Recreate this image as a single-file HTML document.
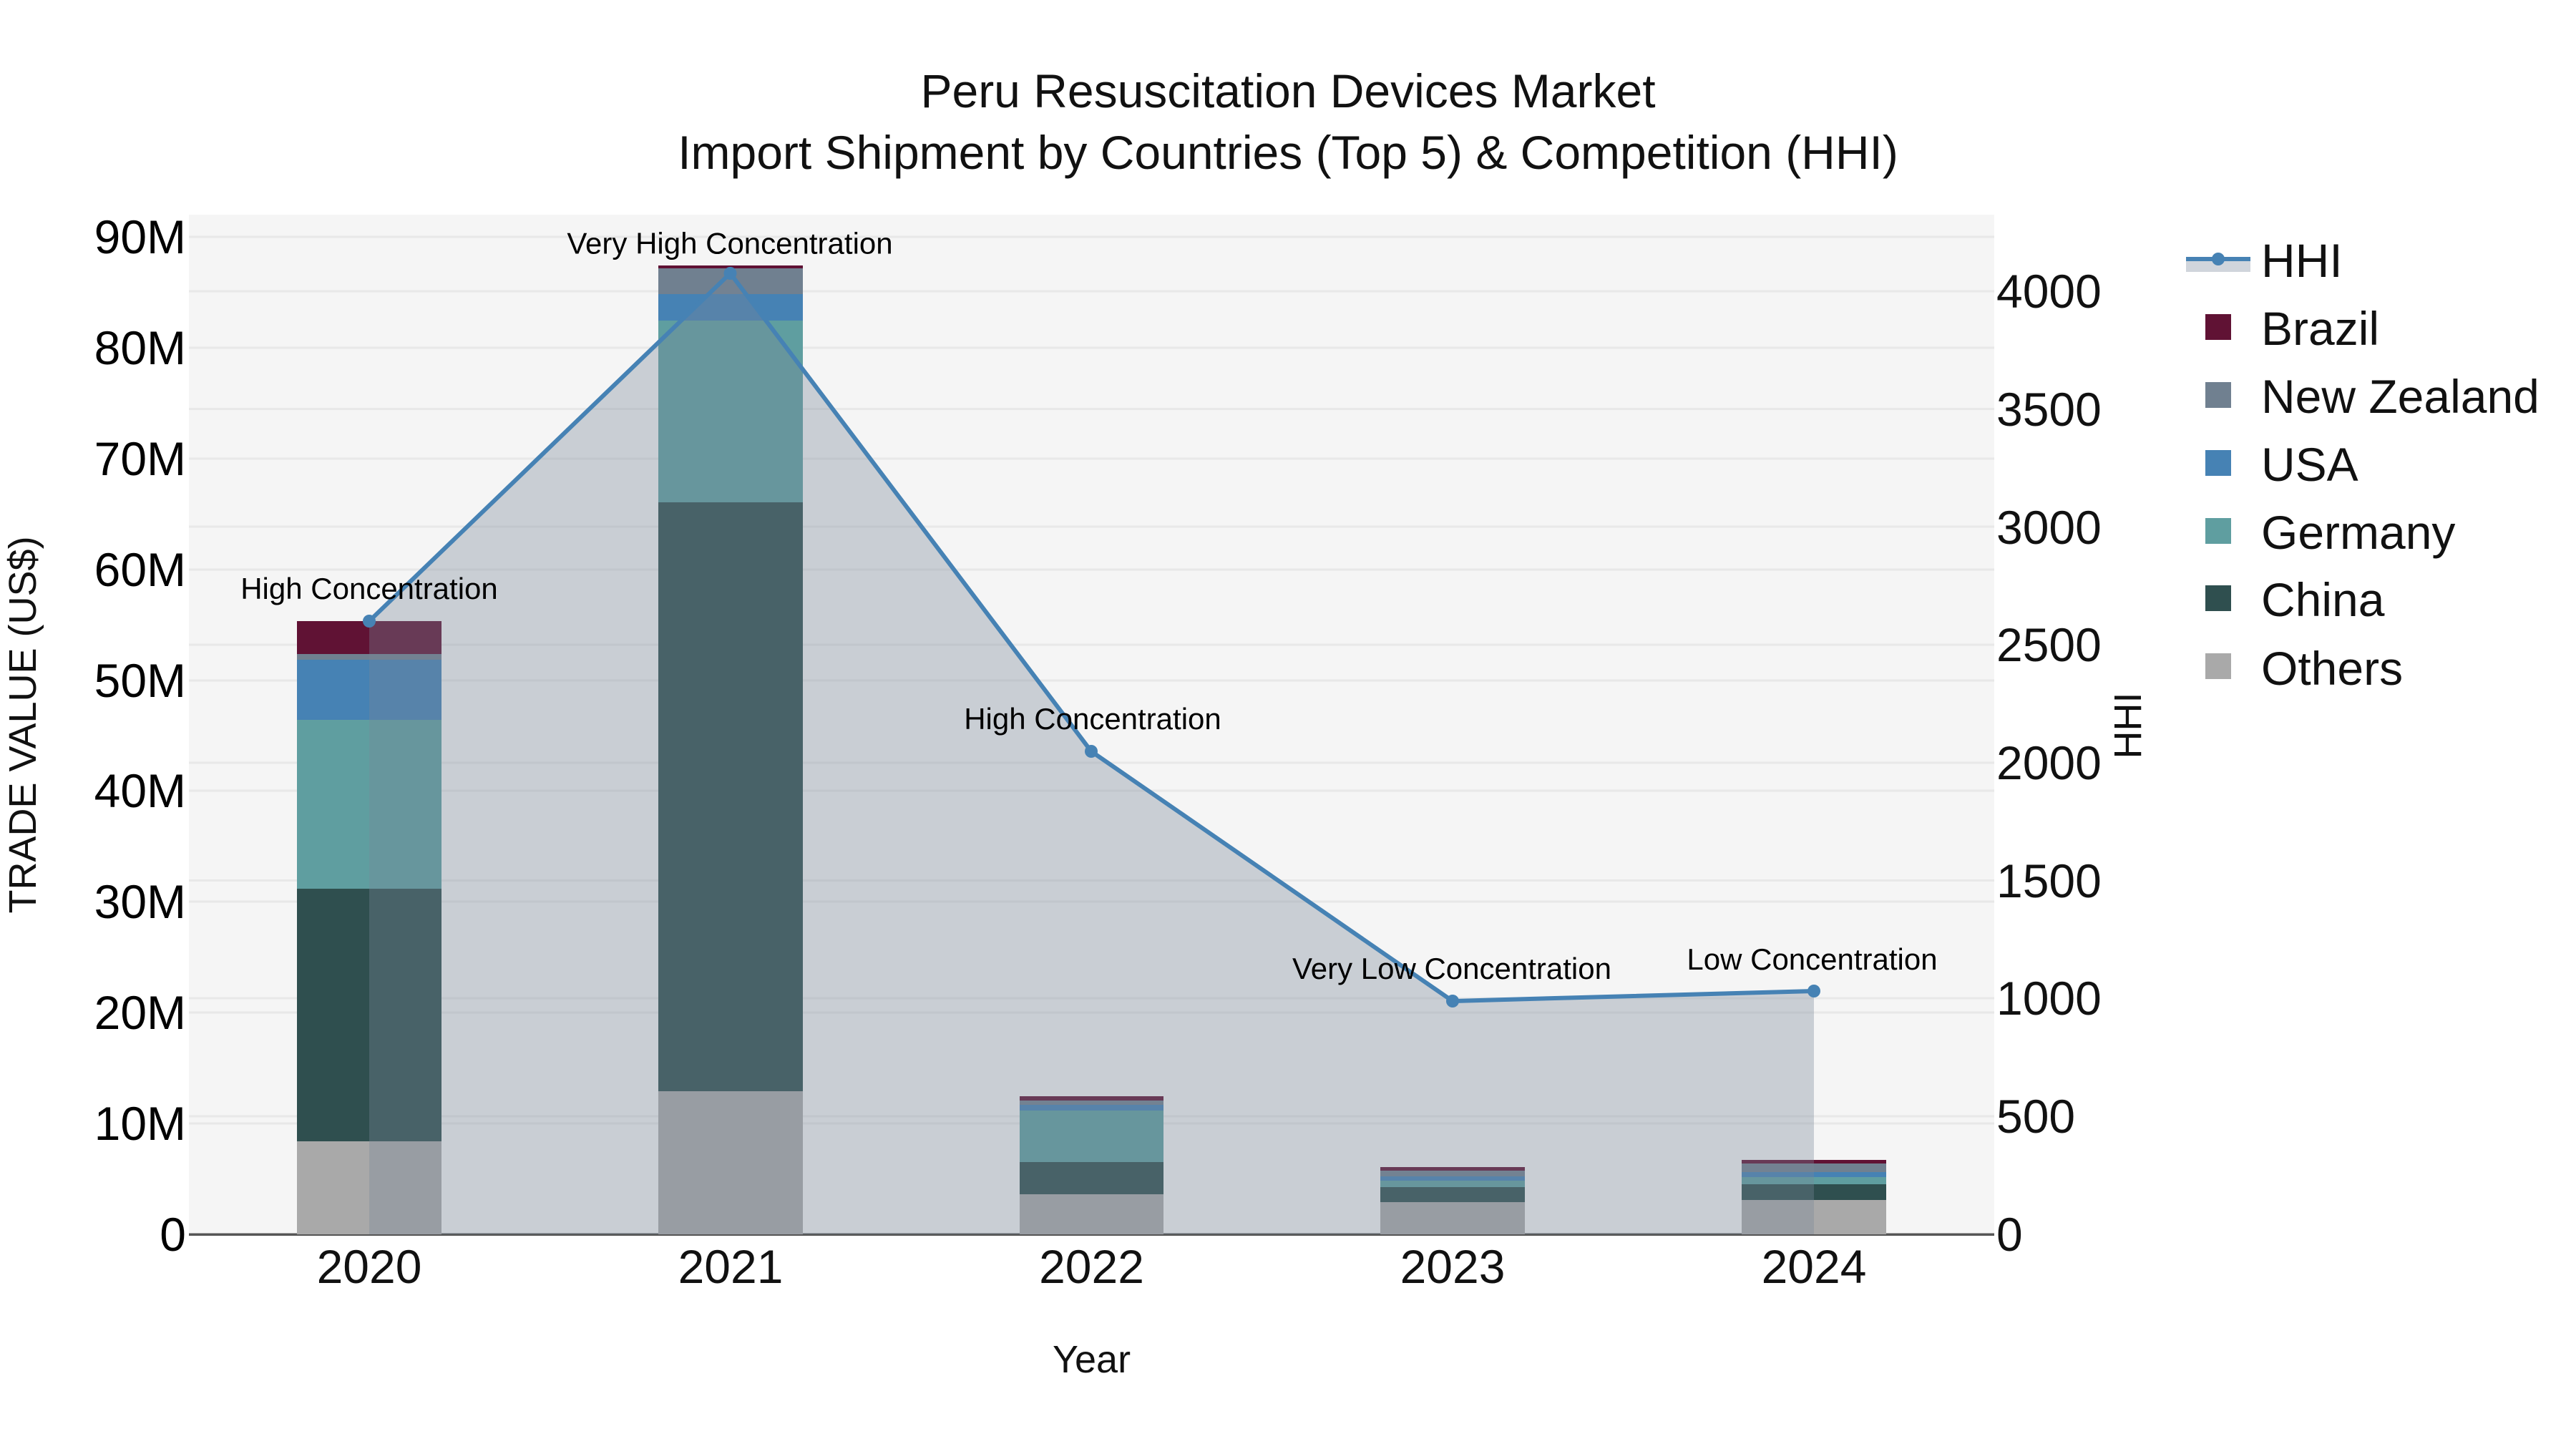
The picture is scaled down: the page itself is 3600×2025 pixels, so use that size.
<!DOCTYPE html>
<html>
<head>
<meta charset="utf-8">
<style>
html,body{margin:0;padding:0;background:#fff;width:3600px;height:2025px;overflow:hidden}
svg{display:block}
text{font-family:"Liberation Sans",Arial,sans-serif}
</style>
</head>
<body>
<svg xmlns="http://www.w3.org/2000/svg" width="3600" height="2025" viewBox="0 0 3600 2025">
<rect width="3600" height="2025" fill="#fff"/>
<rect x="264" y="300" width="2523" height="1425" fill="#f5f5f5"/>
<!-- grids -->
<g stroke="#e8e8e8" stroke-width="3" fill="none">
<path d="M264 331H2787M264 486H2787M264 641H2787M264 796H2787M264 951H2787M264 1105H2787M264 1260H2787M264 1415H2787M264 1570H2787"/>
<path d="M264 407H2787M264 571.500H2787M264 736H2787M264 901H2787M264 1066H2787M264 1230.500H2787M264 1395H2787M264 1560H2787"/>
</g>
<path d="M264 1725.300H2787" stroke="#555" stroke-width="3.500" fill="none"/>
<!-- bars -->
<g shape-rendering="crispEdges">
<!-- 2020 -->
<rect x="415" y="868" width="202" height="46" fill="#601234"/>
<rect x="415" y="914" width="202" height="8" fill="#708090"/>
<rect x="415" y="922" width="202" height="84" fill="#4682b4"/>
<rect x="415" y="1006" width="202" height="236" fill="#5f9ea0"/>
<rect x="415" y="1242" width="202" height="353" fill="#2f4f4f"/>
<rect x="415" y="1595" width="202" height="130" fill="#a9a9a9"/>
<!-- 2021 -->
<rect x="920" y="371" width="202" height="4" fill="#601234"/>
<rect x="920" y="375" width="202" height="36" fill="#708090"/>
<rect x="920" y="411" width="202" height="37" fill="#4682b4"/>
<rect x="920" y="448" width="202" height="254" fill="#5f9ea0"/>
<rect x="920" y="702" width="202" height="823" fill="#2f4f4f"/>
<rect x="920" y="1525" width="202" height="200" fill="#a9a9a9"/>
<!-- 2022 -->
<rect x="1425" y="1532" width="201" height="6" fill="#601234"/>
<rect x="1425" y="1538" width="201" height="6" fill="#708090"/>
<rect x="1425" y="1544" width="201" height="8" fill="#4682b4"/>
<rect x="1425" y="1552" width="201" height="72" fill="#5f9ea0"/>
<rect x="1425" y="1624" width="201" height="45" fill="#2f4f4f"/>
<rect x="1425" y="1669" width="201" height="56" fill="#a9a9a9"/>
<!-- 2023 -->
<rect x="1929" y="1631" width="202" height="5" fill="#601234"/>
<rect x="1929" y="1636" width="202" height="8" fill="#708090"/>
<rect x="1929" y="1644" width="202" height="6" fill="#4682b4"/>
<rect x="1929" y="1650" width="202" height="9" fill="#5f9ea0"/>
<rect x="1929" y="1659" width="202" height="21" fill="#2f4f4f"/>
<rect x="1929" y="1680" width="202" height="45" fill="#a9a9a9"/>
<!-- 2024 -->
<rect x="2434" y="1621" width="202" height="5" fill="#601234"/>
<rect x="2434" y="1626" width="202" height="12" fill="#708090"/>
<rect x="2434" y="1638" width="202" height="7" fill="#4682b4"/>
<rect x="2434" y="1645" width="202" height="10" fill="#5f9ea0"/>
<rect x="2434" y="1655" width="202" height="22" fill="#2f4f4f"/>
<rect x="2434" y="1677" width="202" height="48" fill="#a9a9a9"/>
</g>
<!-- HHI area + line -->
<path d="M516 868L1020.500 382L1525 1050L2030 1399L2535 1385V1725H516Z" fill="rgba(119,135,153,0.35)"/>
<path d="M516 868L1020.500 382L1525 1050L2030 1399L2535 1385" fill="none" stroke="#4682b4" stroke-width="6"/>
<g fill="#4682b4">
<circle cx="516" cy="868" r="9"/>
<circle cx="1020.500" cy="382" r="9"/>
<circle cx="1525" cy="1050" r="9"/>
<circle cx="2030" cy="1399" r="9"/>
<circle cx="2535" cy="1385" r="9"/>
</g>
<!-- annotations -->
<g font-size="42" fill="#000" text-anchor="middle">
<text x="516" y="837">High Concentration</text>
<text x="1020" y="354.500">Very High Concentration</text>
<text x="1527" y="1019">High Concentration</text>
<text x="2029" y="1368">Very Low Concentration</text>
<text x="2532.500" y="1355">Low Concentration</text>
</g>
<!-- title -->
<g font-size="66" fill="#111" text-anchor="middle">
<text x="1800" y="150">Peru Resuscitation Devices Market</text>
<text x="1800" y="236">Import Shipment by Countries (Top 5) &amp; Competition (HHI)</text>
</g>
<!-- left ticks -->
<g font-size="66" fill="#000" text-anchor="end">
<text x="260" y="354">90M</text>
<text x="260" y="509">80M</text>
<text x="260" y="664">70M</text>
<text x="260" y="819">60M</text>
<text x="260" y="974">50M</text>
<text x="260" y="1128">40M</text>
<text x="260" y="1283">30M</text>
<text x="260" y="1438">20M</text>
<text x="260" y="1593">10M</text>
<text x="260" y="1748">0</text>
</g>
<!-- right ticks -->
<g font-size="66" fill="#111" text-anchor="start">
<text x="2790" y="430">4000</text>
<text x="2790" y="595">3500</text>
<text x="2790" y="760">3000</text>
<text x="2790" y="924">2500</text>
<text x="2790" y="1089">2000</text>
<text x="2790" y="1254">1500</text>
<text x="2790" y="1418">1000</text>
<text x="2790" y="1583">500</text>
<text x="2790" y="1748">0</text>
</g>
<!-- x ticks -->
<g font-size="66" fill="#111" text-anchor="middle">
<text x="516" y="1793">2020</text>
<text x="1021" y="1793">2021</text>
<text x="1525.500" y="1793">2022</text>
<text x="2030" y="1793">2023</text>
<text x="2535" y="1793">2024</text>
</g>
<!-- axis titles -->
<text x="1525.500" y="1918" font-size="54" fill="#111" text-anchor="middle">Year</text>
<text transform="translate(50 1013) rotate(-90)" font-size="54" fill="#111" text-anchor="middle">TRADE VALUE (US$)</text>
<text transform="translate(2992 1014) rotate(-90)" font-size="54" fill="#111" text-anchor="middle">HHI</text>
<!-- legend -->
<rect x="3055" y="359" width="90" height="21" fill="#d0d5dc"/>
<path d="M3055 362H3145" stroke="#4682b4" stroke-width="6" fill="none"/>
<circle cx="3100" cy="362" r="9" fill="#4682b4"/>
<g shape-rendering="crispEdges">
<rect x="3082" y="439" width="36" height="36" fill="#601234"/>
<rect x="3082" y="534" width="36" height="36" fill="#708090"/>
<rect x="3082" y="629" width="36" height="36" fill="#4682b4"/>
<rect x="3082" y="724" width="36" height="36" fill="#5f9ea0"/>
<rect x="3082" y="818" width="36" height="36" fill="#2f4f4f"/>
<rect x="3082" y="913" width="36" height="36" fill="#a9a9a9"/>
</g>
<g font-size="66" fill="#111">
<text x="3160" y="387">HHI</text>
<text x="3160" y="482">Brazil</text>
<text x="3160" y="577">New Zealand</text>
<text x="3160" y="672">USA</text>
<text x="3160" y="767">Germany</text>
<text x="3160" y="861">China</text>
<text x="3160" y="957">Others</text>
</g>
</svg>
</body>
</html>
